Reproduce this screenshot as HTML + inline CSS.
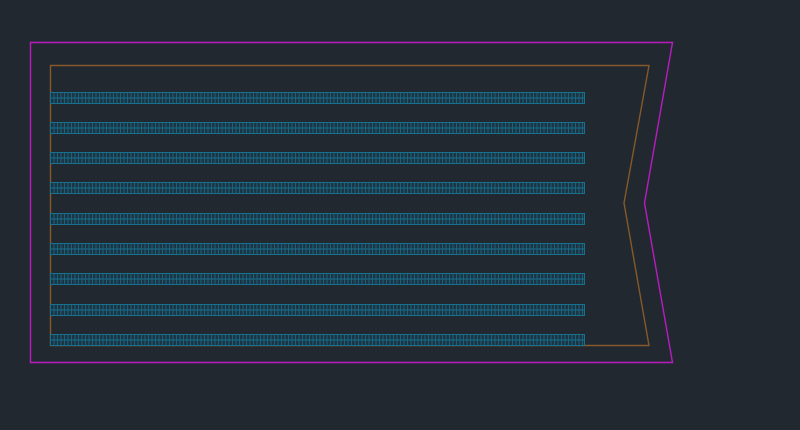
<!DOCTYPE html><html><head><style>html,body{margin:0;padding:0;background:#222830;width:800px;height:430px;overflow:hidden}</style></head><body>
<svg width="800" height="430" viewBox="0 0 800 430" xmlns="http://www.w3.org/2000/svg">
<defs>
<pattern id="p" x="50" y="0" width="3.5" height="430" patternUnits="userSpaceOnUse">
<line x1="0.5" y1="0" x2="0.5" y2="430" stroke="#16627f" stroke-width="1"/>
</pattern>
<g id="row">
<rect x="50" y="0" width="535" height="12" fill="#1d3442"/>
<rect x="50" y="0" width="535" height="12" fill="url(#p)"/>
<rect x="50.5" y="0.5" width="534" height="11" fill="none" stroke="#18708f" stroke-width="1"/>
<line x1="50" y1="6" x2="585" y2="6" stroke="#18708f" stroke-width="1"/>
</g>
</defs>
<polygon points="30.5,42.5 672.5,42.5 644.5,203 672.5,362.5 30.5,362.5" fill="none" stroke="#b81cc0" stroke-width="1.4"/>
<polygon points="50.5,65.5 649,65.5 624,203 649,345.5 50.5,345.5" fill="none" stroke="#85592a" stroke-width="1.4"/>
<use href="#row" y="92"/>
<use href="#row" y="122"/>
<use href="#row" y="152"/>
<use href="#row" y="182"/>
<use href="#row" y="213"/>
<use href="#row" y="243"/>
<use href="#row" y="273"/>
<use href="#row" y="304"/>
<use href="#row" y="334"/>
</svg>
</body></html>
